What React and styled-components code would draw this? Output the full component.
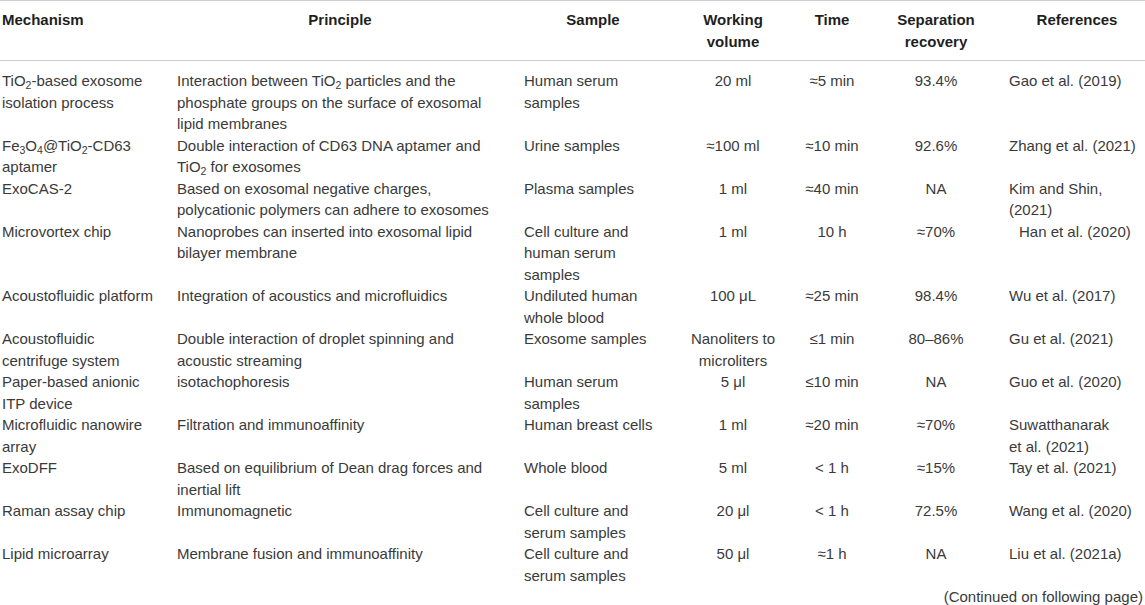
import React from "react"
import styled, { createGlobalStyle } from "styled-components"

const GlobalStyle = createGlobalStyle`
  html, body {
    margin: 0;
    padding: 0;
    background: #fff;
  }
  body {
    font-family: "Liberation Sans", Arial, Helvetica, sans-serif;
    color: #3a3a3a;
  }
`

const Page = styled.div`
  width: 1145px;
`

const Table = styled.table`
  width: 1145px;
  table-layout: fixed;
  border-collapse: collapse;
  border-top: 1px solid #cfcfcf;
  font-size: 15px;
  line-height: 21.5px;
`

const HeadCell = styled.th`
  padding: 8px ${p => p.$pr || 0}px 8px ${p => p.$pl || 0}px;
  vertical-align: top;
  text-align: ${p => p.$align || "center"};
  font-weight: 700;
  color: #1f1f1f;
  white-space: nowrap;
  border-bottom: 1px solid #cfcfcf;
`

const Cell = styled.td`
  padding: ${p => (p.$first ? 9 : 0)}px ${p => p.$pr || 0}px 0
    ${p => p.$pl || 0}px;
  vertical-align: top;
  text-align: ${p => p.$align || "left"};
  white-space: nowrap;
`

const Sub = styled.sub`
  font-size: 0.7em;
  vertical-align: -0.3em;
  line-height: 0;
`

const Footer = styled.div`
  text-align: right;
  padding-right: 2px;
  font-size: 15px;
  line-height: 21.5px;
`

const columns = [
  { key: "mech", width: 172, pl: 2, align: "left", head: ["Mechanism"], headAlign: "left" },
  { key: "principle", width: 343, pl: 5, pr: 12, align: "left", head: ["Principle"] },
  { key: "sample", width: 155, pl: 9, pr: 8, align: "left", head: ["Sample"] },
  { key: "volume", width: 126, align: "center", head: ["Working", "volume"] },
  { key: "time", width: 72, align: "center", head: ["Time"] },
  { key: "recovery", width: 136, align: "center", head: ["Separation", "recovery"] },
  { key: "ref", width: 141, pl: 5, align: "left", head: ["References"] },
]

const rows = [
  {
    mech: [<>TiO<Sub>2</Sub>-based exosome</>, "isolation process"],
    principle: [
      <>Interaction between TiO<Sub>2</Sub> particles and the</>,
      "phosphate groups on the surface of exosomal",
      "lipid membranes",
    ],
    sample: ["Human serum", "samples"],
    volume: ["20 ml"],
    time: ["≈5 min"],
    recovery: ["93.4%"],
    ref: ["Gao et al. (2019)"],
  },
  {
    mech: [<>Fe<Sub>3</Sub>O<Sub>4</Sub>@TiO<Sub>2</Sub>-CD63</>, "aptamer"],
    principle: ["Double interaction of CD63 DNA aptamer and", <>TiO<Sub>2</Sub> for exosomes</>],
    sample: ["Urine samples"],
    volume: ["≈100 ml"],
    time: ["≈10 min"],
    recovery: ["92.6%"],
    ref: ["Zhang et al. (2021)"],
  },
  {
    mech: ["ExoCAS-2"],
    principle: ["Based on exosomal negative charges,", "polycationic polymers can adhere to exosomes"],
    sample: ["Plasma samples"],
    volume: ["1 ml"],
    time: ["≈40 min"],
    recovery: ["NA"],
    ref: ["Kim and Shin,", "(2021)"],
  },
  {
    mech: ["Microvortex chip"],
    principle: ["Nanoprobes can inserted into exosomal lipid", "bilayer membrane"],
    sample: ["Cell culture and", "human serum", "samples"],
    volume: ["1 ml"],
    time: ["10 h"],
    recovery: ["≈70%"],
    ref: ["Han et al. (2020)"],
    refIndent: true,
  },
  {
    mech: ["Acoustofluidic platform"],
    principle: ["Integration of acoustics and microfluidics"],
    sample: ["Undiluted human", "whole blood"],
    volume: ["100 μL"],
    time: ["≈25 min"],
    recovery: ["98.4%"],
    ref: ["Wu et al. (2017)"],
  },
  {
    mech: ["Acoustofluidic", "centrifuge system"],
    principle: ["Double interaction of droplet spinning and", "acoustic streaming"],
    sample: ["Exosome samples"],
    volume: ["Nanoliters to", "microliters"],
    time: ["≤1 min"],
    recovery: ["80–86%"],
    ref: ["Gu et al. (2021)"],
  },
  {
    mech: ["Paper-based anionic", "ITP device"],
    principle: ["isotachophoresis"],
    sample: ["Human serum", "samples"],
    volume: ["5 μl"],
    time: ["≤10 min"],
    recovery: ["NA"],
    ref: ["Guo et al. (2020)"],
  },
  {
    mech: ["Microfluidic nanowire", "array"],
    principle: ["Filtration and immunoaffinity"],
    sample: ["Human breast cells"],
    volume: ["1 ml"],
    time: ["≈20 min"],
    recovery: ["≈70%"],
    ref: ["Suwatthanarak", "et al. (2021)"],
  },
  {
    mech: ["ExoDFF"],
    principle: ["Based on equilibrium of Dean drag forces and", "inertial lift"],
    sample: ["Whole blood"],
    volume: ["5 ml"],
    time: ["< 1 h"],
    recovery: ["≈15%"],
    ref: ["Tay et al. (2021)"],
  },
  {
    mech: ["Raman assay chip"],
    principle: ["Immunomagnetic"],
    sample: ["Cell culture and", "serum samples"],
    volume: ["20 μl"],
    time: ["< 1 h"],
    recovery: ["72.5%"],
    ref: ["Wang et al. (2020)"],
  },
  {
    mech: ["Lipid microarray"],
    principle: ["Membrane fusion and immunoaffinity"],
    sample: ["Cell culture and", "serum samples"],
    volume: ["50 μl"],
    time: ["≈1 h"],
    recovery: ["NA"],
    ref: ["Liu et al. (2021a)"],
  },
]

function Lines({ lines }) {
  return lines.map((line, i) => (
    <React.Fragment key={i}>
      {i > 0 && <br />}
      {line}
    </React.Fragment>
  ))
}

export default function App() {
  return (
    <Page>
      <GlobalStyle />
      <Table>
        <colgroup>
          {columns.map(c => (
            <col key={c.key} style={{ width: c.width }} />
          ))}
        </colgroup>
        <thead>
          <tr>
            {columns.map(c => (
              <HeadCell key={c.key} $pl={c.pl} $pr={c.pr} $align={c.headAlign}>
                <Lines lines={c.head} />
              </HeadCell>
            ))}
          </tr>
        </thead>
        <tbody>
          {rows.map((row, r) => (
            <tr key={r}>
              {columns.map(c => (
                <Cell
                  key={c.key}
                  $first={r === 0}
                  $pl={c.key === "ref" && row.refIndent ? c.pl + 10 : c.pl}
                  $pr={c.pr}
                  $align={c.align}
                >
                  <Lines lines={row[c.key]} />
                </Cell>
              ))}
            </tr>
          ))}
        </tbody>
      </Table>
      <Footer>(Continued on following page)</Footer>
    </Page>
  )
}
